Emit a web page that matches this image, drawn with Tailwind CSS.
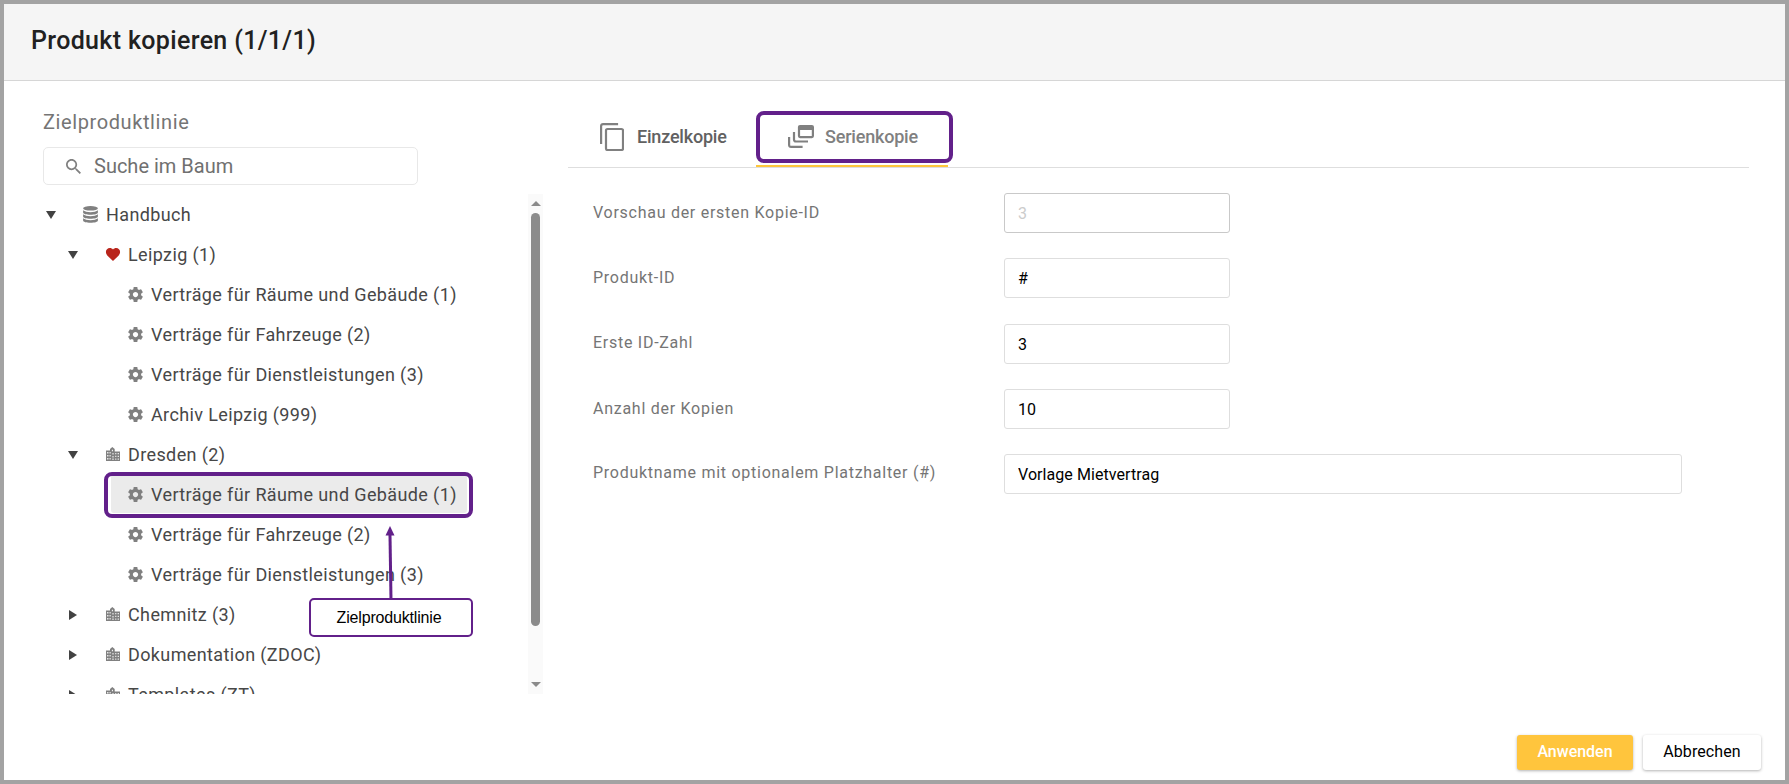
<!DOCTYPE html>
<html lang="de">
<head>
    <meta charset="UTF-8">
    <meta name="viewport" content="width=device-width, initial-scale=1.0">
    <title>Produkt kopieren</title>
    <script src="https://cdn.jsdelivr.net/npm/@tailwindcss/browser@4"></script>
</head>
<body class="font-['Roboto',sans-serif]">
    <!-- Icons -->
    <svg class="hidden">
        <symbol id="database" viewBox="0 0 15 17">
            <ellipse cx="7.5" cy="2.3" rx="7.4" ry="2.3"/>
            <path d="M0.1 4.3c1.5 1.3 4.3 1.9 7.4 1.9s5.9-.6 7.4-1.9v2.2c0 1.3-3.3 2.3-7.4 2.3S0.1 7.8 0.1 6.5z"/>
            <path d="M0.1 8.3c1.5 1.3 4.3 1.9 7.4 1.9s5.9-.6 7.4-1.9v2.2c0 1.3-3.3 2.3-7.4 2.3S0.1 11.8 0.1 10.5z"/>
            <path d="M0.1 12.3c1.5 1.3 4.3 1.9 7.4 1.9s5.9-.6 7.4-1.9v2.2c0 1.3-3.3 2.3-7.4 2.3S0.1 15.8 0.1 14.5z"/>
        </symbol>
        <symbol id="heart" viewBox="2 3 20 18.35">
            <path d="M12 21.35l-1.45-1.32C5.4 15.36 2 12.28 2 8.5 2 5.42 4.42 3 7.5 3c1.74 0 3.41.81 4.5 2.09C13.09 3.81 14.76 3 16.5 3 19.58 3 22 5.42 22 8.5c0 3.78-3.4 6.86-8.55 11.54L12 21.35z"/>
        </symbol>
        <symbol id="gear" viewBox="2 2 20 20">
            <path d="M19.43 12.98c.04-.32.07-.64.07-.98s-.03-.66-.07-.98l2.11-1.65c.19-.15.24-.42.12-.64l-2-3.46c-.12-.22-.39-.3-.61-.22l-2.49 1c-.52-.4-1.08-.73-1.69-.98l-.38-2.65C14.46 2.18 14.25 2 14 2h-4c-.25 0-.46.18-.49.42l-.38 2.65c-.61.25-1.17.59-1.69.98l-2.49-1c-.23-.09-.49 0-.61.22l-2 3.46c-.13.22-.07.49.12.64l2.11 1.65c-.04.32-.07.65-.07.98s.03.66.07.98l-2.11 1.65c-.19.15-.24.42-.12.64l2 3.46c.12.22.39.3.61.22l2.49-1c.52.4 1.08.73 1.69.98l.38 2.65c.03.24.24.42.49.42h4c.25 0 .46-.18.49-.42l.38-2.65c.61-.25 1.17-.59 1.69-.98l2.49 1c.23.09.49 0 .61-.22l2-3.46c.12-.22.07-.49-.12-.64l-2.11-1.65zM12 15.5c-1.93 0-3.5-1.57-3.5-3.5s1.57-3.5 3.5-3.5 3.5 1.57 3.5 3.5-1.57 3.5-3.5 3.5z"/>
        </symbol>
        <symbol id="city" viewBox="0 0 14 14">
            <path fill-rule="evenodd" d="M0 3.5h4V2L6.3 0 8.700 2v2.500H14V14H0zM1.200 5v1.500h1.200V5zM1.200 8v1.500h1.200V8zM1.200 11v1.500h1.200V11zM3.600 5v1.500h1V5zM3.600 8v1.500h1V8zM3.600 11v1.500h1V11zM5.900 2.800v1.400h1V2.800zM6.500 6v1.500h1V6zM6.500 9v1.400h1V9zM6.500 11.600v1.300h1v-1.300zM9.300 6v1.300h1V6zM11.700 6v1.300h1.100V6zM9.300 8.800v1.300h1V8.800zM11.700 8.800v1.300h1.100V8.800zM9.300 11.500v1.300h1v-1.300zM11.700 11.500v1.300h1.100v-1.300z"/>
        </symbol>
    </svg>

    <div class="flex flex-col w-[1789px] h-[784px] border-4 border-[#a3a3a3] bg-white overflow-hidden">
        <header class="h-[77px] shrink-0 bg-[#f5f5f5] border-b border-[#d6d6d6] px-[27px] pt-[18px]">
            <h1 class="text-[25px] leading-[38px] font-medium tracking-[0.34px] text-[#212121]">Produkt kopieren (1/1/1)</h1>
        </header>

        <main class="flex h-[613px] shrink-0">
            <!-- Product line tree -->
            <section class="relative w-[540px] shrink-0 pl-[39px] pt-[25px]">
                <h2 class="text-[20px] leading-8 tracking-[0.6px] text-[#757575]">Zielproduktlinie</h2>
                <div class="mt-[9px] flex items-center w-[375px] h-[38px] border border-[#e8e8e8] rounded-[5px] pl-[22px]">
                    <svg class="w-[15px] h-[15px] mr-[13px]" viewBox="3 3 17.5 17.5" fill="#808080"><path d="M15.5 14h-.79l-.28-.27C15.41 12.59 16 11.11 16 9.5 16 5.91 13.09 3 9.5 3S3 5.91 3 9.5 5.91 16 9.5 16c1.61 0 3.09-.59 4.23-1.57l.27.28v.79l5 4.99L20.49 19l-4.99-5zm-6 0C7.01 14 5 11.99 5 9.5S7.01 5 9.5 5 14 7.01 14 9.5 11.99 14 9.5 14z"/></svg>
                    <span class="text-[20px] text-[#707070]">Suche im Baum</span>
                </div>
                <div class="mt-[9px] flex h-[500px] overflow-hidden">
                    <ul id="tree" class="w-[485px] shrink-0 text-[18px] tracking-[0.38px] text-[#474747]"></ul>
                    <div class="w-[15px] shrink-0 bg-[#fafafa] flex flex-col items-center pt-[7px] pb-[7px]">
                        <svg class="w-[10px] h-[5px] shrink-0" viewBox="0 0 10 5" fill="#8b8b8b"><path d="M0 5L5 0l5 5z"/></svg>
                        <div class="w-[9px] h-[413px] mb-auto mt-[7px] rounded-full bg-[#8b8b8b]"></div>
                        <svg class="w-[10px] h-[5px] shrink-0" viewBox="0 0 10 5" fill="#8b8b8b"><path d="M0 0h10L5 5z"/></svg>
                    </div>
                </div>

                <!-- Callout -->
                <div class="absolute left-[100px] top-[391px] w-[369px] h-[46px] border-4 border-[#62208a] rounded-[8px]"></div>
                <svg class="absolute left-[381px] top-[445px] w-[10px] h-[74px]" viewBox="0 0 10 74"><path d="M5 9L6 74" stroke="#62208a" stroke-width="3"/><path d="M5 0l4.5 9.5h-9z" fill="#62208a"/></svg>
                <div class="absolute left-[305px] top-[517px] w-[164px] h-[39px] border-2 border-[#62208a] rounded-[5px] bg-white flex items-center justify-center pr-1 font-['Liberation_Sans',sans-serif] text-[16px] tracking-[-0.17px] text-black">Zielproduktlinie</div>
            </section>

            <!-- Copy settings -->
            <section class="flex-1 pl-6 pt-[30px]">
                <div class="flex h-[57px] w-[1181px] border-b border-[#dedede] text-[18px] font-medium tracking-[-0.2px]">
                    <div class="flex items-center w-[188px] h-[51px] pl-8 text-[#616161]">
                        <svg class="w-6 h-7 mr-[13px]" viewBox="0 0 24 28" fill="none" stroke="#808080" stroke-width="2.2"><path d="M1.100 21V3a2 2 0 0 1 2-1.900h15"/><rect x="6" y="6" width="17" height="21" rx="1.5"/></svg>
                        Einzelkopie
                    </div>
                    <div class="relative flex items-center w-[192px] h-[56px] pb-[3px] pl-8 border-b-2 border-[#fec63d] text-[#808080]">
                        <svg class="w-[26px] h-[23px] mr-[11px]" viewBox="0 0 26 23" fill="none" stroke="#808080" stroke-width="2.2"><path d="M1.100 12v8a2 2 0 0 0 2 1.900h11.500M6 7v7.500a2 2 0 0 0 2 2h12"/><rect x="11" y="1.1" width="13.9" height="11" rx="1"/><path d="M11 3h14" stroke-width="4"/></svg>
                        Serienkopie
                        <div class="absolute left-0 top-0 w-[197px] h-[52px] border-4 border-[#62208a] rounded-[8px]"></div>
                    </div>
                </div>

                <form class="pl-[25px] pt-[25px] flex flex-col gap-[25.25px] text-[16px]">
                    <div class="flex">
                        <label class="w-[411px] pt-2 tracking-[0.73px] text-[#757575]">Vorschau der ersten Kopie-ID</label>
                        <input value="3" disabled class="w-[226px] h-10 border border-[#c9c9c9] rounded-[3px] px-[13px] pt-px text-[#cccccc]">
                    </div>
                    <div class="flex">
                        <label class="w-[411px] pt-2 tracking-[0.73px] text-[#757575]">Produkt-ID</label>
                        <input value="#" class="w-[226px] h-10 border border-[#dedede] rounded-[3px] px-[13px] pt-px text-black">
                    </div>
                    <div class="flex">
                        <label class="w-[411px] pt-[7px] tracking-[0.73px] text-[#757575]">Erste ID-Zahl</label>
                        <input value="3" class="w-[226px] h-10 border border-[#dedede] rounded-[3px] px-[13px] pt-px text-black">
                    </div>
                    <div class="flex">
                        <label class="w-[411px] pt-2 tracking-[0.73px] text-[#757575]">Anzahl der Kopien</label>
                        <input value="10" class="w-[226px] h-10 border border-[#dedede] rounded-[3px] px-[13px] pt-px text-black">
                    </div>
                    <div class="flex">
                        <label class="w-[411px] pt-[7px] tracking-[0.73px] text-[#757575]">Produktname mit optionalem Platzhalter (#)</label>
                        <input value="Vorlage Mietvertrag" class="w-[678px] h-10 border border-[#dedede] rounded-[3px] px-[13px] tracking-[0.07px] text-black">
                    </div>
                </form>
            </section>
        </main>

        <footer class="flex justify-end gap-[10px] pt-[41px] pr-6 text-[16px]">
            <button class="w-[116px] h-[35px] pb-[2px] rounded-[3px] bg-[#ffc53d] text-white font-medium shadow-[0_1px_3px_rgba(0,0,0,0.3)]">Anwenden</button>
            <button class="w-[118px] h-[35px] pb-[2px] rounded-[3px] bg-white text-black tracking-[0.1px] shadow-[0_1px_3px_rgba(0,0,0,0.3)]">Abbrechen</button>
        </footer>
    </div>

    <script>
        const nodes = [
            { level: 0, icon: 'database', open: true, label: 'Handbuch' },
            { level: 1, icon: 'heart', open: true, label: 'Leipzig (1)' },
            { level: 2, icon: 'gear', label: 'Verträge für Räume und Gebäude (1)' },
            { level: 2, icon: 'gear', label: 'Verträge für Fahrzeuge (2)' },
            { level: 2, icon: 'gear', label: 'Verträge für Dienstleistungen (3)' },
            { level: 2, icon: 'gear', label: 'Archiv Leipzig (999)' },
            { level: 1, icon: 'city', open: true, label: 'Dresden (2)' },
            { level: 2, icon: 'gear', selected: true, label: 'Verträge für Räume und Gebäude (1)' },
            { level: 2, icon: 'gear', label: 'Verträge für Fahrzeuge (2)' },
            { level: 2, icon: 'gear', label: 'Verträge für Dienstleistungen (3)' },
            { level: 1, icon: 'city', open: false, label: 'Chemnitz (3)' },
            { level: 1, icon: 'city', open: false, label: 'Dokumentation (ZDOC)' },
            { level: 1, icon: 'city', open: false, label: 'Templates (ZT)' }
        ];
        const indent = ['pl-0', 'pl-[22px]', 'pl-[45px]'];
        const iconClass = {
            database: 'w-[15px] h-[17px] mr-2 fill-[#808080]',
            heart: 'w-4 h-[13px] mr-[7px] fill-[#b9251c]',
            gear: 'w-[15px] h-[15px] mr-2 fill-[#808080]',
            city: 'w-[14px] h-[14px] ml-px mr-2 fill-[#808080]'
        };
        const arrows = {
            true: 'M0 0h10L5 8z',
            false: 'M1 -1l8 5-8 5z'
        };

        nodes.forEach(node => {
            const li = document.createElement('li');
            li.className = 'flex h-10 items-center ' + indent[node.level];
            const arrow = node.open === undefined ? '' : `<path d="${arrows[node.open]}" fill="#424242"/>`;
            li.innerHTML = `
                <svg class="w-[10px] h-2 mt-[2px] ml-[3px] mr-[10px] shrink-0 overflow-visible" viewBox="0 0 10 8">${arrow}</svg>
                <div class="flex items-center h-[38px] pl-[17px] pr-[10px] rounded-[3px] whitespace-nowrap ${node.selected ? 'bg-[#ebebeb]' : ''}">
                    <svg class="shrink-0 ${iconClass[node.icon]}"><use href="#${node.icon}"/></svg>${node.label}
                </div>`;
            document.getElementById('tree').appendChild(li);
        });
    </script>
</body>
</html>
